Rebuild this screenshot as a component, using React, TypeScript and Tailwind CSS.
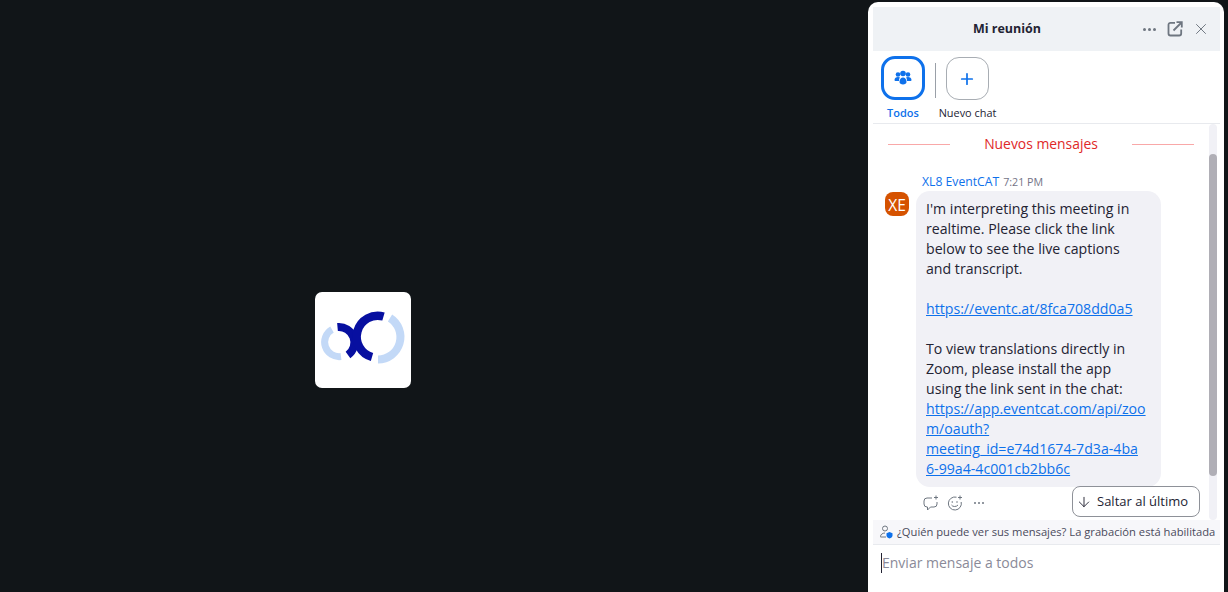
import React from "react";
import { X, Plus, ArrowDown } from "lucide-react";

function Logo() {
  return (
    <svg width="96" height="96" viewBox="0 0 96 96" className="block">
      <rect width="96" height="96" rx="7" fill="#ffffff" />
      <path d="M17 37.500 A14.500 14.500 0 0 0 26 64.500" fill="none" stroke="#c3d9f7" strokeWidth="7" />
      <path d="M75 26 A22.500 22.500 0 0 1 63 67.500" fill="none" stroke="#c3d9f7" strokeWidth="8" />
      <path d="M22.500 35 A15.500 15.500 0 0 1 33 63" fill="none" stroke="#070fa0" strokeWidth="8" />
      <path d="M68.500 24.500 A21 21 0 0 0 57 65" fill="none" stroke="#070fa0" strokeWidth="8.500" />
    </svg>
  );
}

function Group() {
  return (
    <svg width="18" height="18" viewBox="0 0 18 18" fill="#0e71eb">
      <circle cx="4" cy="5.500" r="2.300" />
      <circle cx="14" cy="5.500" r="2.300" />
      <circle cx="9" cy="4.500" r="2.800" />
      <path d="M0.500 11c0-2 1.500-3 3.500-3 1 0 1.600.2 2 .6-.8.8-1 1.800-1 3.400H2c-1 0-1.500-.4-1.500-1z" />
      <path d="M17.500 11c0-2-1.500-3-3.500-3-1 0-1.600.2-2 .6.8.8 1 1.800 1 3.400h3c1 0 1.500-.4 1.500-1z" />
      <path d="M5.500 13c0-3 1.500-4.500 3.500-4.500s3.500 1.500 3.500 4.500c0 1.500-1.500 2.500-3.500 2.500s-3.500-1-3.500-2.500z" />
    </svg>
  );
}

function PopOut() {
  return (
    <svg width="16" height="16" viewBox="0 0 16 16" fill="none" stroke="#6e7680" strokeWidth="1.800">
      <path d="M8 1.800H3.500A2 2 0 0 0 1.500 3.800V12.500A2 2 0 0 0 3.500 14.500H12.200A2 2 0 0 0 14.200 12.500V8.500" />
      <path d="M6.500 9.500L14.500 1.500M9.500 1.200H14.800V6.500" />
    </svg>
  );
}

function ReplyIcon() {
  return (
    <svg width="16" height="16" viewBox="0 0 16 16" fill="none" stroke="#6e7680" strokeWidth="1">
      <path d="M9 3H4a3 3 0 0 0-3 3v3a3 3 0 0 0 3 3h.500v3l3-3H11a3 3 0 0 0 3-3V7" />
      <path d="M13 0.500v4M11 2.500h4" />
    </svg>
  );
}

function EmojiIcon() {
  return (
    <svg width="16" height="16" viewBox="0 0 16 16" fill="none" stroke="#6e7680" strokeWidth="1">
      <path d="M9.500 2.200A6.500 6.500 0 1 0 14.200 7" />
      <path d="M13 0.500v4M11 2.500h4" />
      <circle cx="5.300" cy="7" r=".8" fill="#6e7680" stroke="none" />
      <circle cx="10" cy="7" r=".8" fill="#6e7680" stroke="none" />
      <path d="M4.500 10c1 2 5 2 6.500 0" />
    </svg>
  );
}

function WhoIcon() {
  return (
    <svg width="14" height="14" viewBox="0 0 14 14" fill="none">
      <circle cx="5" cy="3.500" r="2.500" stroke="#6e7680" />
      <path d="M.5 12v-.5c0-2 2-3.500 4.500-3.500M.5 12H6" stroke="#6e7680" />
      <path d="M9.500 7l3 1.300v2.200c0 1.500-1.500 2.500-3 3-1.500-.5-3-1.500-3-3V8.300z" fill="#0e71eb" />
    </svg>
  );
}

const a = "text-[#0e71eb] underline";

export default function App() {
  return (
    <div className="h-[592px] w-[1228px] overflow-hidden bg-[#111518] flex font-['Open_Sans','Noto_Sans',sans-serif]">
      <div className="flex-1 flex items-center justify-center">
        <div className="ml-[-143px] mt-[87px]"><Logo /></div>
      </div>
      <div className="w-[356px] mt-[2px] mr-[4px] bg-white rounded-t-[10px] pl-[5px] pr-[4px] pt-[5px] flex flex-col text-[#232333]">
        <div className="h-[44px] shrink-0 bg-[#eff2f5] flex items-center">
          <div className="flex-1 text-center text-[12.500px] font-bold text-[#232333]">Mi reunión</div>
          <div className="w-[79px] pl-[2px] flex items-center">
            <div className="flex gap-[2px]">
              <span className="w-[3px] h-[3px] rounded-full bg-[#6e7680]" />
              <span className="w-[3px] h-[3px] rounded-full bg-[#6e7680]" />
              <span className="w-[3px] h-[3px] rounded-full bg-[#6e7680]" />
            </div>
            <div className="ml-[11px]"><PopOut /></div>
            <div className="ml-[9px]"><X size={18} color="#6e7680" strokeWidth={1.3} /></div>
          </div>
        </div>
        <div className="h-[73px] shrink-0 border-b border-[#e8eaee] flex items-start pl-[8px] pt-[5px]">
          <div className="flex flex-col items-center w-[44px]">
            <div className="w-[44px] h-[44px] rounded-[14px] border-[3px] border-[#0e71eb] flex items-center justify-center"><Group /></div>
            <div className="mt-[5px] text-[11px] leading-[15px] font-semibold text-[#0e71eb]">Todos</div>
          </div>
          <div className="w-px h-[35px] bg-[#9aa0a8] ml-[10px] mt-[7px]" />
          <div className="flex flex-col items-center w-[60px] ml-[1px]">
            <div className="w-[43px] h-[43px] mt-[1px] rounded-[13px] border border-[#a8adb3] flex items-center justify-center"><Plus size={18} color="#0e71eb" strokeWidth={2.300} /></div>
            <div className="mt-[5px] ml-[1px] text-[10.900px] leading-[15px] whitespace-nowrap text-[#232333]">Nuevo chat</div>
          </div>
        </div>
        <div className="flex-1 min-h-0 relative flex">
          <div className="flex-1 min-w-0 pl-[12px] pr-[15px]">
            <div className="flex items-center h-[41px] text-[13.900px] text-[#e02828]">
              <div className="w-[62px] h-px ml-[3px] bg-[#f9a8a8]" />
              <div className="flex-1 text-center">Nuevos mensajes</div>
              <div className="w-[62px] h-px bg-[#f9a8a8]" />
            </div>
            <div className="pl-[37px] h-[26px] leading-[16px] pt-[7px] flex items-center gap-[4px] whitespace-nowrap">
              <span className="text-[#0e71eb] text-[12.200px]">XL8 EventCAT</span>
              <span className="text-[#747487] text-[10.700px]">7:21 PM</span>
            </div>
            <div className="flex items-start">
              <div className="w-[24px] h-[24px] shrink-0 mt-[1px] rounded-[8px] bg-[#d55200] text-white text-[15.500px] leading-[26px] text-center">XE</div>
              <div className="ml-[7px] w-[245px] shrink-0 rounded-[14px] bg-[#f1f1f6] px-[10px] py-[8px] text-[14.150px] leading-[20px] text-[#232333]">
                <div>I'm interpreting this meeting in<br />realtime. Please click the link<br />below to see the live captions<br />and transcript.</div>
                <div className="h-[20px]" />
                <div><a className={a}>https://eventc.at/8fca708dd0a5</a></div>
                <div className="h-[20px]" />
                <div>To view translations directly in<br />Zoom, please install the app<br />using the link sent in the chat:</div>
                <div className="whitespace-nowrap"><a className={a}>https://app.eventcat.com/api/zoo<br />m/oauth?<br />meeting_id=e74d1674-7d3a-4ba<br />6-99a4-4c001cb2bb6c</a></div>
              </div>
            </div>
            <div className="pl-[38px] mt-[8px] flex items-center gap-[8px]">
              <ReplyIcon /><EmojiIcon />
              <div className="flex gap-[2px] ml-[3px]">
                <span className="w-[2px] h-[2px] rounded-full bg-[#6e7680]" />
                <span className="w-[2px] h-[2px] rounded-full bg-[#6e7680]" />
                <span className="w-[2px] h-[2px] rounded-full bg-[#6e7680]" />
              </div>
            </div>
          </div>
          <div className="w-[8px] mr-[3px] shrink-0 bg-[#f1f1f6] rounded-[4px] relative overflow-hidden">
            <div className="absolute top-[30px] left-0 w-[8px] h-[322px] rounded-[4px] bg-[#b0afb6]" />
          </div>
          <div className="absolute left-[199px] top-[362px] w-[128px] h-[31px] rounded-[8px] border border-[#8e9198] bg-white flex items-center pl-[3px] gap-[5px] text-[13px]">
            <ArrowDown size={16} color="#232333" strokeWidth={1.400} />
            <span className="whitespace-nowrap">Saltar al último</span>
          </div>
        </div>
        <div className="h-[25px] shrink-0 bg-[#f7f7fa] border-b border-[#e8eaee] flex items-center pl-[7px] gap-[3px] text-[11.200px] whitespace-nowrap overflow-hidden text-[#4a4a5c]">
          <WhoIcon />
          <span>¿Quién puede ver sus mensajes? La grabación está habilitada</span>
        </div>
        <div className="h-[47px] shrink-0 pl-[8px] pt-[8px] text-[14px] leading-[20px] text-[#8a8a98] flex items-start">
          <span className="w-px h-[20px] bg-[#232333]" />
          <span>Enviar mensaje a todos</span>
        </div>
      </div>
    </div>
  );
}
